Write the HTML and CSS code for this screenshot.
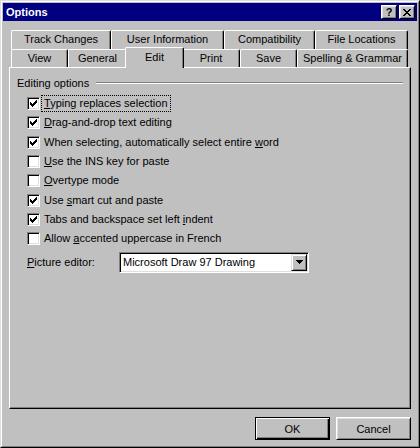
FILE: index.html
```html
<!DOCTYPE html>
<html lang="en">
<head>
    <meta charset="UTF-8">
    <title>Options</title>
    <link rel="stylesheet" href="styles.css">
</head>
<body>
    <div class="window">
        <div class="frame">

            <!-- Caption -->
            <div class="titlebar">
                <span class="title">Options</span>
                <div class="caption-buttons">
                    <div class="cap-btn help">?</div>
                    <div class="cap-btn">
                        <svg width="8" height="7" viewBox="0 0 8 7" shape-rendering="crispEdges"><path d="M0 0h2v1H0zM6 0h2v1H6zM1 1h2v1H1zM5 1h2v1H5zM2 2h4v1H2zM3 3h2v1H3zM2 4h4v1H2zM1 5h2v1H1zM5 5h2v1H5zM0 6h2v1H0zM6 6h2v1H6z"/></svg>
                    </div>
                </div>
            </div>

            <!-- Tabs -->
            <div class="tabs">
                <div class="tab-row back">
                    <div class="tab w-track">Track Changes</div>
                    <div class="tab w-user">User Information</div>
                    <div class="tab w-compat">Compatibility</div>
                    <div class="tab w-files">File Locations</div>
                </div>
                <div class="tab-row front">
                    <div class="tab w-view">View</div>
                    <div class="tab w-general">General</div>
                    <div class="tab w-edit active">Edit</div>
                    <div class="tab w-print">Print</div>
                    <div class="tab w-save">Save</div>
                    <div class="tab w-spell">Spelling &amp; Grammar</div>
                </div>
            </div>

            <!-- Edit page -->
            <div class="panel">
                <div class="group-heading">
                    <span>Editing options</span>
                    <div class="etched"></div>
                </div>

                <div class="options">
                    <div class="option">
                        <div class="check on"><svg width="7" height="7" viewBox="0 0 7 7" shape-rendering="crispEdges"><path d="M0 2h1v3H0zM1 3h1v3H1zM2 4h1v3H2zM3 3h1v3H3zM4 2h1v3H4zM5 1h1v3H5zM6 0h1v3H6z"/></svg></div>
                        <span class="label focused"><u>T</u>yping replaces selection</span>
                    </div>
                    <div class="option">
                        <div class="check on"><svg width="7" height="7" viewBox="0 0 7 7" shape-rendering="crispEdges"><path d="M0 2h1v3H0zM1 3h1v3H1zM2 4h1v3H2zM3 3h1v3H3zM4 2h1v3H4zM5 1h1v3H5zM6 0h1v3H6z"/></svg></div>
                        <span class="label"><u>D</u>rag-and-drop text editing</span>
                    </div>
                    <div class="option">
                        <div class="check on"><svg width="7" height="7" viewBox="0 0 7 7" shape-rendering="crispEdges"><path d="M0 2h1v3H0zM1 3h1v3H1zM2 4h1v3H2zM3 3h1v3H3zM4 2h1v3H4zM5 1h1v3H5zM6 0h1v3H6z"/></svg></div>
                        <span class="label">When selecting, automatically select entire <u>w</u>ord</span>
                    </div>
                    <div class="option">
                        <div class="check"></div>
                        <span class="label"><u>U</u>se the INS key for paste</span>
                    </div>
                    <div class="option">
                        <div class="check"></div>
                        <span class="label"><u>O</u>vertype mode</span>
                    </div>
                    <div class="option">
                        <div class="check on"><svg width="7" height="7" viewBox="0 0 7 7" shape-rendering="crispEdges"><path d="M0 2h1v3H0zM1 3h1v3H1zM2 4h1v3H2zM3 3h1v3H3zM4 2h1v3H4zM5 1h1v3H5zM6 0h1v3H6z"/></svg></div>
                        <span class="label">Use <u>s</u>mart cut and paste</span>
                    </div>
                    <div class="option">
                        <div class="check on"><svg width="7" height="7" viewBox="0 0 7 7" shape-rendering="crispEdges"><path d="M0 2h1v3H0zM1 3h1v3H1zM2 4h1v3H2zM3 3h1v3H3zM4 2h1v3H4zM5 1h1v3H5zM6 0h1v3H6z"/></svg></div>
                        <span class="label">Tabs and backspace set left <u>i</u>ndent</span>
                    </div>
                    <div class="option">
                        <div class="check"></div>
                        <span class="label">Allow <u>a</u>ccented uppercase in French</span>
                    </div>
                </div>

                <div class="picture-row">
                    <span class="picture-label"><u>P</u>icture editor:</span>
                    <div class="combo">
                        <span class="combo-text">Microsoft Draw 97 Drawing</span>
                        <div class="combo-btn">
                            <svg width="7" height="4" viewBox="0 0 7 4" shape-rendering="crispEdges"><path d="M0 0h7v1H0zM1 1h5v1H1zM2 2h3v1H2zM3 3h1v1H3z"/></svg>
                        </div>
                    </div>
                </div>
            </div>

            <!-- Dialog buttons -->
            <div class="footer">
                <div class="button default">OK</div>
                <div class="button">Cancel</div>
            </div>

        </div>
    </div>
</body>
</html>
```

FILE: styles.css
```css
/* General */
body {
    margin: 0;
    font-family: 'Liberation Sans', Arial, sans-serif;
    font-size: 11px;
    color: #000;
    background: #c0c0c0;
}

/* Window frame */
.window {
    width: 420px;
    height: 448px;
    box-sizing: border-box;
    border: 1px solid;
    border-color: #dfdfdf #000 #000 #dfdfdf;
    background: #c0c0c0;
}

.frame {
    height: 100%;
    box-sizing: border-box;
    border: 1px solid;
    border-color: #fff #808080 #808080 #fff;
    padding: 1px;
    display: flex;
    flex-direction: column;
}

/* Title bar */
.titlebar {
    height: 18px;
    background: #000080;
    color: #fff;
    display: flex;
    align-items: center;
    justify-content: space-between;
    padding: 0 2px 0 3px;
}

.title {
    font-weight: bold;
    font-size: 11px;
}

.caption-buttons {
    display: flex;
    gap: 2px;
}

.cap-btn {
    width: 16px;
    height: 14px;
    box-sizing: border-box;
    background: #c0c0c0;
    color: #000;
    border: 1px solid;
    border-color: #fff #000 #000 #fff;
    box-shadow: inset 1px 1px #dfdfdf, inset -1px -1px #808080;
    display: flex;
    align-items: center;
    justify-content: center;
}

.cap-btn.help {
    font-weight: bold;
    font-size: 11px;
    line-height: 12px;
}

/* Tabs */
.tabs {
    margin-top: 9px;
    padding-left: 8px;
}

.tab-row {
    display: flex;
    align-items: flex-start;
}

.tab-row.back {
    height: 19px;
}

.tab-row.front {
    height: 18px;
}

.tab {
    box-sizing: border-box;
    height: 100%;
    border-top: 1px solid #fff;
    border-left: 1px solid #fff;
    border-right: 1px solid #000;
    box-shadow: inset -1px 0 #808080;
    border-radius: 2px 2px 0 0;
    background: #c0c0c0;
    text-align: center;
    line-height: 17px;
    white-space: nowrap;
}

.tab.active {
    height: 21px;
    margin: -2px -2px -1px;
    line-height: 18px;
    z-index: 1;
}

.w-track { width: 100px; }
.w-user { width: 113px; }
.w-compat { width: 91px; }
.w-files { width: 93px; }

.w-view { width: 57px; }
.w-general { width: 59px; }
.w-edit { width: 59px; }
.w-print { width: 58px; }
.w-save { width: 57px; }
.w-spell { width: 111px; }

/* Tab page */
.panel {
    height: 342px;
    margin: 0 6px;
    box-sizing: border-box;
    border: 1px solid;
    border-color: #fff #000 #000 #fff;
    box-shadow: inset -1px -1px #808080;
    padding: 8px 7px 0 7px;
}

.group-heading {
    display: flex;
    align-items: center;
    gap: 7px;
    height: 14px;
    line-height: 14px;
}

.etched {
    flex: 1;
    border-top: 1px solid #808080;
    border-bottom: 1px solid #fff;
}

.options {
    margin-top: 4px;
    padding-left: 10px;
}

.option {
    height: 19.33px;
    display: flex;
    align-items: center;
}

.check {
    width: 13px;
    height: 13px;
    box-sizing: border-box;
    background: #fff;
    border: 1px solid;
    border-color: #808080 #fff #fff #808080;
    box-shadow: inset 1px 1px #000, inset -1px -1px #dfdfdf;
    display: flex;
    align-items: center;
    justify-content: center;
    flex-shrink: 0;
}

.label {
    margin-left: 1px;
    padding: 1px 2px;
    border: 1px solid transparent;
    line-height: 13px;
    white-space: nowrap;
}

.label.focused {
    border: 1px dotted #000;
}

u {
    text-decoration-thickness: 1px;
    text-underline-offset: 1px;
}

/* Picture editor */
.picture-row {
    margin-top: 3px;
    padding-left: 10px;
    display: flex;
    align-items: center;
}

.picture-label {
    width: 92px;
}

.combo {
    width: 190px;
    height: 21px;
    box-sizing: border-box;
    background: #fff;
    border: 1px solid;
    border-color: #808080 #fff #fff #808080;
    box-shadow: inset 1px 1px #000, inset -1px -1px #dfdfdf;
    padding: 1px 1px 1px 3px;
    display: flex;
    align-items: center;
    justify-content: space-between;
}

.combo-btn {
    width: 16px;
    height: 17px;
    box-sizing: border-box;
    background: #c0c0c0;
    border: 1px solid;
    border-color: #dfdfdf #000 #000 #dfdfdf;
    box-shadow: inset 1px 1px #fff, inset -1px -1px #808080;
    display: flex;
    align-items: center;
    justify-content: center;
}

/* Buttons */
.footer {
    margin-top: 8px;
    padding-right: 6px;
    display: flex;
    justify-content: flex-end;
    gap: 6px;
}

.button {
    width: 75px;
    height: 23px;
    box-sizing: border-box;
    border: 1px solid;
    border-color: #fff #000 #000 #fff;
    box-shadow: inset 1px 1px #dfdfdf, inset -1px -1px #808080;
    display: flex;
    align-items: center;
    justify-content: center;
}

.button.default {
    border: 1px solid #000;
    box-shadow: inset 1px 1px #fff, inset -1px -1px #000, inset -2px -2px #808080;
}
```
